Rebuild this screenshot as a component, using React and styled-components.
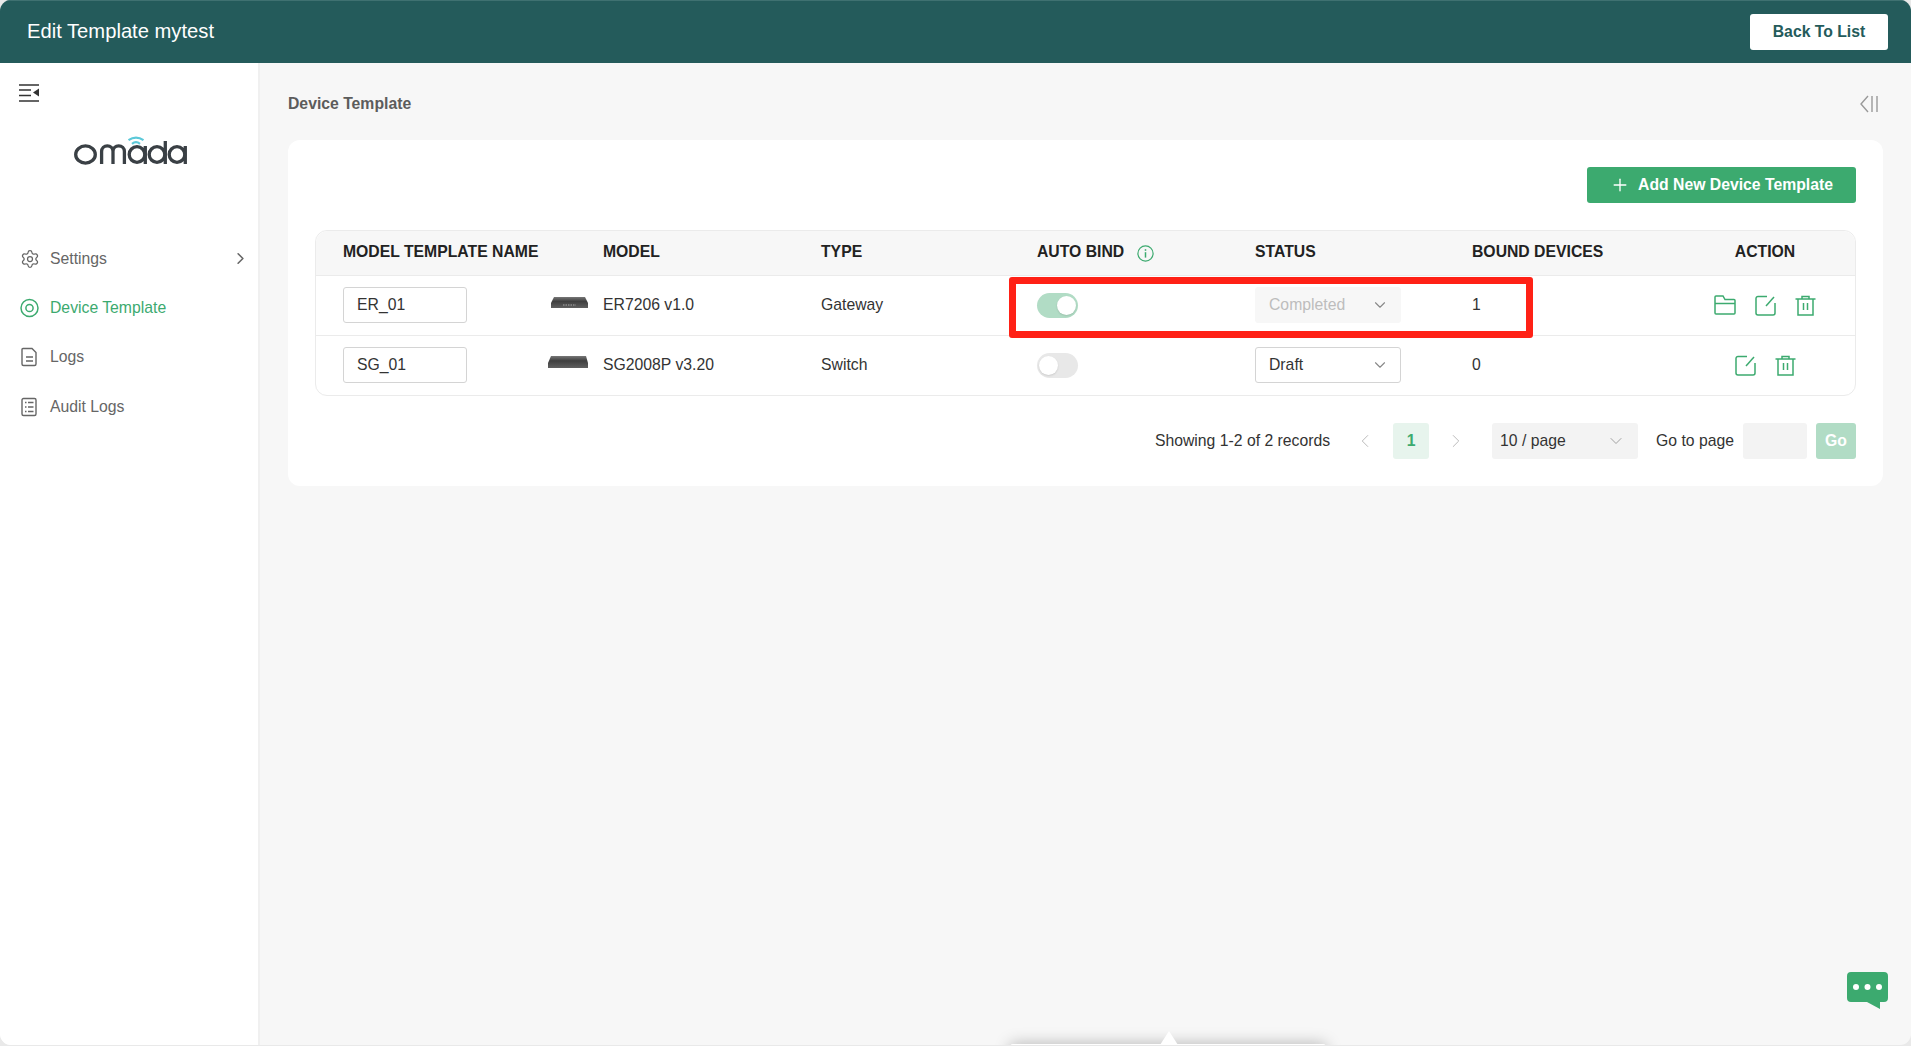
import styled, { createGlobalStyle } from "styled-components";
import { ChevronDown, ChevronLeft, ChevronRight, Plus, Settings } from "lucide-react";

const GREEN = "#3caa6f";
const TEAL = "#245b5b";

const GlobalStyle = createGlobalStyle`
  html, body { margin: 0; padding: 0; background: #e9e9e9; }
  body { font-family: "Liberation Sans", Arial, sans-serif; color: #333; overflow: hidden; }
  * { box-sizing: border-box; }
`;

const Frame = styled.div`
  position: relative;
  height: 1045px;
  display: flex;
  flex-direction: column;
  border-radius: 11px;
  overflow: hidden;
  background: #f7f7f7;
`;

const Header = styled.header`
  height: 63px;
  flex: none;
  background: ${TEAL};
  border-top: 1px solid #3f7171;
  display: flex;
  align-items: center;
  justify-content: space-between;
  padding: 0 23px 0 27px;
`;

const Title = styled.h1`
  margin: 0 0 2px;
  font-size: 20.2px;
  font-weight: 400;
  color: #fff;
`;

const BackButton = styled.button`
  width: 138px;
  height: 36px;
  border: 0;
  border-radius: 3px;
  background: #fff;
  color: ${TEAL};
  font: bold 15.75px "Liberation Sans", Arial, sans-serif;
`;

const Body = styled.div`
  flex: 1;
  display: flex;
  min-height: 0;
`;

const Sidebar = styled.aside`
  width: 260px;
  flex: none;
  background: #fff;
  border-right: 2px solid #f0f0f0;
  padding-top: 21px;
`;

const MenuToggle = styled.svg`
  display: block;
  margin-left: 19px;
`;

const Logo = styled.svg`
  display: block;
  margin: 34px auto 0 74px;
`;

const Nav = styled.nav`
  margin-top: 68px;
`;

const NavItem = styled.div`
  height: 49.4px;
  display: flex;
  align-items: center;
  gap: 10px;
  padding: 0 8px 0 20px;
  font-size: 15.75px;
  color: ${(p) => (p.$active ? GREEN : "#666")};
  svg { flex: none; }
`;

const NavLabel = styled.span`
  flex: 1;
`;

const Main = styled.main`
  flex: 1;
  padding: 0 28px 0 28px;
`;

const TopBar = styled.div`
  height: 77px;
  display: flex;
  align-items: center;
  justify-content: space-between;
  padding: 4px 5px 0 0;
`;

const Crumb = styled.div`
  font-size: 15.75px;
  font-weight: 700;
  color: #5c5c5c;
`;

const Card = styled.section`
  width: 1595px;
  background: #fff;
  border-radius: 12px;
  padding: 27px;
`;

const CardActions = styled.div`
  display: flex;
  justify-content: flex-end;
  margin-bottom: 27px;
`;

const AddButton = styled.button`
  width: 269px;
  height: 36px;
  border: 0;
  border-radius: 3px;
  background: ${GREEN};
  color: #fff;
  font: bold 15.75px "Liberation Sans", Arial, sans-serif;
  display: flex;
  align-items: center;
  justify-content: center;
  gap: 8px;
`;

const Table = styled.div`
  position: relative;
  border: 1px solid #ebebeb;
  border-radius: 12px;
`;

const Row = styled.div`
  display: grid;
  grid-template-columns: 280px 198px 216px 218px 217px 217px 1fr;
  align-items: center;
  height: ${(p) => (p.$head ? "44px" : "60px")};
  padding-bottom: 2px;
  background: ${(p) => (p.$head ? "#f7f7f7" : "transparent")};
  border-radius: ${(p) => (p.$head ? "12px 12px 0 0" : "0")};
  border-top: ${(p) => (p.$head ? "0" : "1px solid #ebebeb")};
  font-size: 15.75px;
`;

const Cell = styled.div`
  display: flex;
  align-items: center;
  padding-left: 27px;
  min-width: 0;
  white-space: nowrap;
`;

const NameCell = styled(Cell)`
  justify-content: space-between;
  padding-right: 8px;
`;

const ModelCell = styled(Cell)`
  padding-left: 7px;
`;

const ActionCell = styled(Cell)`
  justify-content: center;
  padding-right: 14px;
  gap: 19px;
  svg { margin-top: 1px; }
`;

const HeadText = styled.span`
  font-weight: 700;
  color: #222;
`;

const InfoIcon = styled.svg`
  margin-left: 13px;
  margin-top: 2px;
`;

const NameInput = styled.input`
  width: 124px;
  height: 36px;
  border: 1px solid #d4d4d4;
  border-radius: 3px;
  padding: 0 13px;
  font: 15.75px "Liberation Sans", Arial, sans-serif;
  color: #333;
  outline: none;
`;

const DeviceShape = styled.svg`
  margin-bottom: 5px;
`;

const Toggle = styled.div`
  position: relative;
  width: 41px;
  height: 25px;
  margin-top: 2px;
  border-radius: 13px;
  background: ${(p) => (p.$on ? "#b1dcc5" : "#e8e8e8")};
  &::after {
    content: "";
    position: absolute;
    top: 3px;
    left: ${(p) => (p.$on ? "20px" : "2px")};
    width: 19px;
    height: 19px;
    border-radius: 50%;
    background: #fff;
    box-shadow: 0 1px 2px rgba(0, 0, 0, 0.12);
  }
`;

const StatusSelect = styled.div`
  width: 146px;
  height: 36px;
  display: flex;
  align-items: center;
  justify-content: space-between;
  padding: 0 11px 0 13px;
  border-radius: 3px;
  border: 1px solid ${(p) => (p.$disabled ? "#f7f7f7" : "#d4d4d4")};
  background: ${(p) => (p.$disabled ? "#f7f7f7" : "#fff")};
  color: ${(p) => (p.$disabled ? "#bdbdbd" : "#333")};
`;

const Highlight = styled.div`
  position: absolute;
  left: 693px;
  top: 46px;
  width: 524px;
  height: 61px;
  border: 7px solid #ff2116;
  border-radius: 3px;
  pointer-events: none;
`;

const Pager = styled.div`
  display: flex;
  align-items: center;
  justify-content: flex-end;
  margin-top: 27px;
  height: 36px;
  font-size: 15.75px;
  color: #333;
`;

const PagerArrow = styled.span`
  width: 63px;
  display: flex;
  justify-content: center;
  color: #b5b5b5;
  padding: ${(p) => (p.$next ? "0 10px 0 0" : "0 0 0 6px")};
`;

const PageNumber = styled.div`
  width: 36px;
  height: 36px;
  display: flex;
  align-items: center;
  justify-content: center;
  border-radius: 3px;
  background: #e7f4ed;
  color: ${GREEN};
  font-weight: 700;
`;

const PageSize = styled.div`
  width: 146px;
  height: 36px;
  margin: 0 18px 0 0;
  display: flex;
  align-items: center;
  justify-content: space-between;
  padding: 0 12px 0 8px;
  border-radius: 3px;
  background: #f3f3f3;
`;

const GoInput = styled.input`
  width: 64px;
  height: 36px;
  margin: 0 9px;
  border: 0;
  border-radius: 3px;
  background: #f3f3f3;
  outline: none;
`;

const GoButton = styled.button`
  width: 40px;
  height: 36px;
  border: 0;
  padding: 0;
  border-radius: 3px;
  background: #b1dcc5;
  color: #fff;
  font: bold 15.75px "Liberation Sans", Arial, sans-serif;
`;

const ChatBubble = styled.svg`
  position: absolute;
  left: 1847px;
  top: 972px;
`;

const Popover = styled.div`
  position: absolute;
  left: 1010px;
  top: 1044px;
  width: 316px;
  height: 30px;
  background: #fff;
  border-radius: 3px;
  box-shadow: 0 0 16px rgba(0, 0, 0, 0.28);
  &::before {
    content: "";
    position: absolute;
    left: 150px;
    top: -13px;
    border-left: 9px solid transparent;
    border-right: 9px solid transparent;
    border-bottom: 14px solid #fff;
  }
`;

const GearIcon = () => <Settings size={20} strokeWidth={1.5} color="#666" />;

const TargetIcon = () => (
  <svg width="20" height="20" viewBox="0 0 20 20" fill="none" stroke={GREEN} strokeWidth="1.5">
    <circle cx="9.5" cy="10" r="8.5" />
    <circle cx="9.5" cy="10" r="3.6" />
  </svg>
);

const LogsIcon = () => (
  <svg width="20" height="20" viewBox="0 0 20 20" fill="none" stroke="#666" strokeWidth="1.4">
    <path d="M3 1.5h9l4 4V17a1.5 1.5 0 0 1-1.5 1.5h-11A1.5 1.5 0 0 1 2 17V2.5a1 1 0 0 1 1-1z" />
    <path d="M6 10h7M6 14h7" />
  </svg>
);

const AuditIcon = () => (
  <svg width="20" height="20" viewBox="0 0 20 20" fill="none" stroke="#666" strokeWidth="1.4">
    <rect x="2" y="1.5" width="14" height="17" rx="1.5" />
    <path d="M5 5.5h1.5M8 5.5h5.5M5 10h1.5M8 10h5.5M5 14.5h1.5M8 14.5h5.5" />
  </svg>
);

const FolderIcon = () => (
  <svg width="22" height="20" viewBox="0 0 22 20" fill="none" stroke={GREEN} strokeWidth="1.5">
    <path d="M1 2a1 1 0 0 1 1-1h7l2 3.5h9a1 1 0 0 1 1 1V18a1 1 0 0 1-1 1H2a1 1 0 0 1-1-1z" />
    <path d="M1 8.5h20" />
  </svg>
);

const EditIcon = () => (
  <svg width="21" height="21" viewBox="0 0 21 21" fill="none" stroke={GREEN} strokeWidth="1.5">
    <path d="M12 1.5H3A2 2 0 0 0 1 3.5V18a2 2 0 0 0 2 2h15a2 2 0 0 0 2-2V8" />
    <path d="M11 11l8-9" />
  </svg>
);

const TrashIcon = () => (
  <svg width="21" height="21" viewBox="0 0 21 21" fill="none" stroke={GREEN} strokeWidth="1.5">
    <path d="M0.5 4h20M7 4V1.5h7V4M3 4v16h15V4" />
    <path d="M8.5 8v7M12.5 8v7" />
  </svg>
);

const InfoMark = () => (
  <InfoIcon width="17" height="17" viewBox="0 0 17 17" fill="none" stroke={GREEN} strokeWidth="1.2">
    <circle cx="8.5" cy="8.5" r="7.6" />
    <path d="M8.5 7.2v5.4" strokeWidth="1.5" />
    <path d="M8.5 4.2v1.6" strokeWidth="1.5" />
  </InfoIcon>
);

const DeviceImage = ({ wide }) => (
  <DeviceShape width={wide ? 40 : 37} height="12" viewBox={wide ? "0 0 40 12" : "0 0 37 12"}>
    <defs>
      <linearGradient id={wide ? "devW" : "devN"} x1="0" y1="0" x2="0" y2="1">
        <stop offset="0" stopColor="#777" />
        <stop offset="0.4" stopColor="#3f3f3f" />
        <stop offset="1" stopColor="#5f5f5f" />
      </linearGradient>
    </defs>
    <path
      d={wide ? "M3 0H38L40 7V12H0V7z" : "M3 1H34L37 7V12H0V7z"}
      fill={`url(#${wide ? "devW" : "devN"})`}
    />
    {!wide && <path d="M12 9h13" stroke="#aaa" strokeWidth="1" strokeDasharray="1.5 1" />}
  </DeviceShape>
);

const OmadaLogo = () => (
  <Logo width="113" height="30" viewBox="0 0 113 30" fill="none" stroke="#3a4045" strokeWidth="3.3">
    <ellipse cx="11.5" cy="18.5" rx="9.8" ry="8.6" />
    <path d="M27.6 28V15.5a5.7 5.7 0 0 1 11.4 0V28M39 15.5a5.7 5.7 0 0 1 11.4 0V28" />
    <circle cx="63" cy="18.5" r="7.8" />
    <path d="M71.3 10v18" />
    <circle cx="83" cy="18.5" r="7.8" />
    <path d="M91.3 5v23" />
    <circle cx="103" cy="18.5" r="7.8" />
    <path d="M111.3 10v18" />
    <path d="M54.5 4.2Q62 -1 69.5 4.2M58 7.8Q62 4.6 66 7.8" stroke="#5cc9d9" strokeWidth="2.2" />
  </Logo>
);

const templates = [
  { name: "ER_01", model: "ER7206 v1.0", type: "Gateway", on: true, status: "Completed", bound: 1 },
  { name: "SG_01", model: "SG2008P v3.20", type: "Switch", on: false, status: "Draft", bound: 0 },
];

const App = () => {
  return (
    <>
      <GlobalStyle />
      <Frame>
        <Header>
          <Title>Edit Template mytest</Title>
          <BackButton>Back To List</BackButton>
        </Header>
        <Body>
          <Sidebar>
            <MenuToggle width="20" height="18" viewBox="0 0 20 18" stroke="#333" strokeWidth="1.6" fill="none">
              <path d="M0 1h20M0 6h12M0 11.5h12M0 17h20" />
              <path d="M20 4.5v8L14 8.5z" fill="#333" stroke="none" />
            </MenuToggle>
            <OmadaLogo />
            <Nav>
              <NavItem>
                <GearIcon />
                <NavLabel>Settings</NavLabel>
                <ChevronRight size={19} strokeWidth={2} color="#666" />
              </NavItem>
              <NavItem $active>
                <TargetIcon />
                <NavLabel>Device Template</NavLabel>
              </NavItem>
              <NavItem>
                <LogsIcon />
                <NavLabel>Logs</NavLabel>
              </NavItem>
              <NavItem>
                <AuditIcon />
                <NavLabel>Audit Logs</NavLabel>
              </NavItem>
            </Nav>
          </Sidebar>
          <Main>
            <TopBar>
              <Crumb>Device Template</Crumb>
              <svg width="18" height="18" viewBox="0 0 18 18" fill="none" stroke="#999" strokeWidth="1.4">
                <path d="M8 1L1 9l7 8M12 1v16M17 1v16" />
              </svg>
            </TopBar>
            <Card>
              <CardActions>
                <AddButton>
                  <Plus size={20} strokeWidth={1.6} />
                  Add New Device Template
                </AddButton>
              </CardActions>
              <Table>
                <Row $head>
                  <Cell><HeadText>MODEL TEMPLATE NAME</HeadText></Cell>
                  <ModelCell><HeadText>MODEL</HeadText></ModelCell>
                  <Cell><HeadText>TYPE</HeadText></Cell>
                  <Cell><HeadText>AUTO BIND</HeadText><InfoMark /></Cell>
                  <Cell><HeadText>STATUS</HeadText></Cell>
                  <Cell><HeadText>BOUND DEVICES</HeadText></Cell>
                  <ActionCell><HeadText>ACTION</HeadText></ActionCell>
                </Row>
                {templates.map((t) => (
                  <Row key={t.name}>
                    <NameCell>
                      <NameInput defaultValue={t.name} />
                      <DeviceImage wide={!t.on} />
                    </NameCell>
                    <ModelCell>{t.model}</ModelCell>
                    <Cell>{t.type}</Cell>
                    <Cell><Toggle $on={t.on} /></Cell>
                    <Cell>
                      <StatusSelect $disabled={t.on}>
                        {t.status}
                        <ChevronDown size={18} strokeWidth={1.5} color="#888" />
                      </StatusSelect>
                    </Cell>
                    <Cell>{t.bound}</Cell>
                    <ActionCell>
                      {t.on && <FolderIcon />}
                      <EditIcon />
                      <TrashIcon />
                    </ActionCell>
                  </Row>
                ))}
                <Highlight />
              </Table>
              <Pager>
                Showing 1-2 of 2 records
                <PagerArrow><ChevronLeft size={22} strokeWidth={1} /></PagerArrow>
                <PageNumber>1</PageNumber>
                <PagerArrow $next><ChevronRight size={22} strokeWidth={1} /></PagerArrow>
                <PageSize>
                  10 / page
                  <ChevronDown size={20} strokeWidth={1.1} color="#999" />
                </PageSize>
                Go to page
                <GoInput />
                <GoButton>Go</GoButton>
              </Pager>
            </Card>
          </Main>
        </Body>
        <ChatBubble width="41" height="37" viewBox="0 0 41 37">
          <path d="M4 0H37a4 4 0 0 1 4 4V26a4 4 0 0 1-4 4H33V37L20 30H4a4 4 0 0 1-4-4V4a4 4 0 0 1 4-4z" fill={GREEN} />
          <circle cx="9" cy="15" r="3" fill="#fff" />
          <circle cx="20.5" cy="15" r="3" fill="#fff" />
          <circle cx="32" cy="15" r="3" fill="#fff" />
        </ChatBubble>
        <Popover />
      </Frame>
    </>
  );
};

export default App;
